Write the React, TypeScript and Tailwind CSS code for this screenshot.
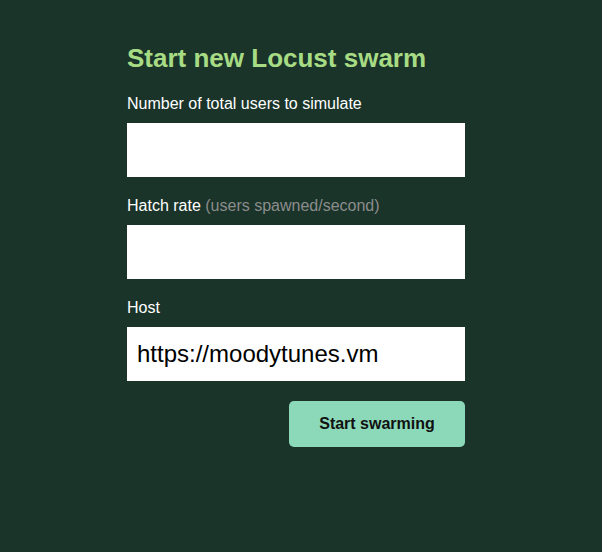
import React from 'react';

const font = { fontFamily: '"Liberation Sans", Arial, sans-serif' };

export default function App() {
  return (
    <div className="w-[602px] h-[552px] bg-[#1a342a] pl-[127px]" style={font}>
      <form className="w-[338px] pt-[43px]" onSubmit={(e) => e.preventDefault()}>
        <h2 className="text-[26px] leading-[30px] font-bold text-[#a7dc84] mb-[22px]">
          Start new Locust swarm
        </h2>

        <label className="block text-[16px] leading-[18px] text-white mb-[10px]">
          Number of total users to simulate
        </label>
        <input className="block w-full h-[54px] bg-white px-[10px] text-[24px] text-black outline-none" />

        <label className="block text-[16px] leading-[18px] text-white mt-[20px] mb-[10px]">
          Hatch rate <span className="text-[#8c8c8c]">(users spawned/second)</span>
        </label>
        <input className="block w-full h-[54px] bg-white px-[10px] text-[24px] text-black outline-none" />

        <label className="block text-[16px] leading-[18px] text-white mt-[20px] mb-[10px]">Host</label>
        <input
          defaultValue="https://moodytunes.vm"
          className="block w-full h-[54px] bg-white px-[10px] text-[24px] text-black outline-none"
          style={font}
        />

        <div className="flex justify-end mt-[20px]">
          <button
            type="submit"
            className="w-[176px] h-[46px] rounded-[5px] bg-[#8cd9b9] text-[16px] font-bold text-[#111]"
          >
            Start swarming
          </button>
        </div>
      </form>
    </div>
  );
}
